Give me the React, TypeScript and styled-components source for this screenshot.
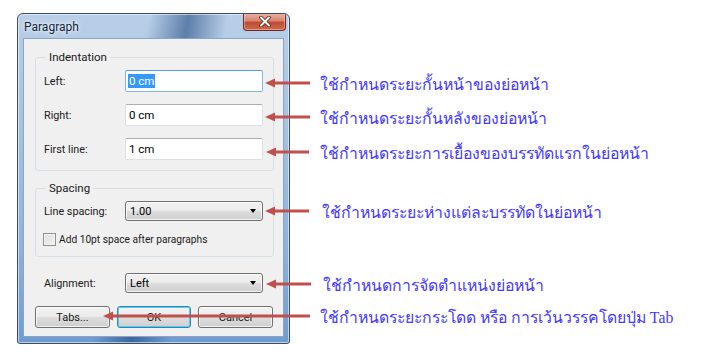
import React from "react";
import styled, { createGlobalStyle } from "styled-components";

const GlobalStyle = createGlobalStyle`
  html, body { margin: 0; padding: 0; background: #ffffff; }
  body {
    width: 709px;
    height: 356px;
    overflow: hidden;
    font-family: Roboto, "Liberation Sans", sans-serif;
  }
`;

const Page = styled.div`
  position: relative;
  width: 709px;
  height: 356px;
  box-sizing: border-box;
  padding: 13px 0 0 17px;
`;

const Window = styled.div`
  width: 273px;
  height: 331px;
  box-sizing: border-box;
  border: 1px solid #3a4d63;
  border-radius: 6px 6px 3px 3px;
  display: flex;
  flex-direction: column;
  background:
    linear-gradient(100deg, rgba(255,255,255,0) 0%, rgba(255,255,255,0) 40%, rgba(20,60,120,0.55) 52%, rgba(255,255,255,0) 64%, rgba(255,255,255,0) 100%),
    linear-gradient(180deg, #b9cfe8 0%, #a8c3e2 30%, #8fb2dc 70%, #6f9ccf 100%);
  box-shadow: inset 0 0 0 1px rgba(255, 255, 255, 0.55);
  overflow: hidden;
`;

const TitleBar = styled.div`
  height: 24px;
  display: flex;
  align-items: flex-start;
  justify-content: space-between;
  padding-left: 6px;
  padding-right: 3px;
`;

const Title = styled.span`
  font-size: 12px;
  line-height: 26px;
  color: #10243a;
  text-shadow: 0 0 6px rgba(255, 255, 255, 0.9), 0 0 3px rgba(255, 255, 255, 0.9);
`;

const CloseButton = styled.div`
  width: 43px;
  height: 18px;
  margin-top: -1px;
  box-sizing: border-box;
  border: 1px solid #6b2a22;
  border-top: none;
  border-radius: 0 0 4px 4px;
  background: linear-gradient(180deg, #eab3a6 0%, #d98672 45%, #c24a33 55%, #cf6a4d 100%);
  box-shadow: inset 0 0 0 1px rgba(255, 255, 255, 0.35);
  display: flex;
  align-items: center;
  justify-content: center;
`;

const Client = styled.div`
  flex: 1;
  margin: 0 5px 6px 5px;
  background: #f0f0f0;
  border: 1px solid #8aa6c4;
  box-sizing: border-box;
  padding: 11px 9px 0 11px;
  display: flex;
  flex-direction: column;
  font-size: 11px;
  color: #000;
`;

const Group = styled.fieldset<{ $mt?: number }>`
  margin: ${(p) => p.$mt ?? 0}px 0 0 0;
  padding: 5px 9px 10px 8px;
  border: 1px solid #d5dfe5;
  border-radius: 3px;
  min-inline-size: 0;
  display: flex;
  flex-direction: column;
`;

const Legend = styled.legend`
  padding: 0 3px;
  margin-left: 2px;
  font-size: 11.5px;
  line-height: 15px;
  color: #1a1a1a;
`;

const Rows = styled.div<{ $gap: number }>`
  display: flex;
  flex-direction: column;
  gap: ${(p) => p.$gap}px;
`;

const Row = styled.div<{ $pl?: number; $mt?: number }>`
  display: flex;
  align-items: center;
  padding-left: ${(p) => p.$pl ?? 0}px;
  margin-top: ${(p) => p.$mt ?? 0}px;
`;

const Label = styled.span`
  width: 81px;
  flex: none;
  font-size: 10.8px;
  color: #1a1a1a;
`;

const TextBox = styled.div<{ $focused?: boolean }>`
  width: 138px;
  height: 22px;
  box-sizing: border-box;
  background: #fff;
  border: 1px solid ${(p) => (p.$focused ? "#7eb4ea" : "#dbdfe6")};
  border-top-color: ${(p) => (p.$focused ? "#569de5" : "#abadb3")};
  border-radius: 2px;
  padding: 0 0 0 2px;
  display: flex;
  align-items: center;
  font-size: 11.5px;
`;

const Selected = styled.span`
  background: #3399ff;
  color: #fff;
  padding: 0 1px;
  line-height: 14px;
`;

const Plain = styled.span`
  padding: 0 1px;
`;

const Combo = styled.div`
  width: 138px;
  height: 20px;
  box-sizing: border-box;
  border: 1px solid #707070;
  border-radius: 3px;
  background: linear-gradient(180deg, #f2f2f2 0%, #ebebeb 50%, #dddddd 51%, #cfcfcf 100%);
  box-shadow: inset 0 0 0 1px rgba(255, 255, 255, 0.7);
  display: flex;
  align-items: center;
  justify-content: space-between;
  padding: 0 6px 0 4px;
  font-size: 11px;
`;

const Caret = styled.span`
  width: 0;
  height: 0;
  border-left: 3.5px solid transparent;
  border-right: 3.5px solid transparent;
  border-top: 4px solid #000;
`;

const CheckRow = styled.div`
  display: flex;
  align-items: center;
  gap: 3px;
  margin-top: 12px;
  margin-left: -1px;
  font-size: 10.2px;
  color: #1a1a1a;
`;

const CheckBox = styled.span`
  width: 13px;
  height: 13px;
  box-sizing: border-box;
  border: 1px solid #8e8f8f;
  background: linear-gradient(135deg, #dcdcdc 0%, #f4f4f4 100%);
  box-shadow: inset 0 0 0 1px #f4f4f4;
`;

const ButtonRow = styled.div`
  display: flex;
  gap: 7px;
  margin-top: 13px;
`;

const Button = styled.div<{ $w: number; $default?: boolean }>`
  width: ${(p) => p.$w}px;
  height: 22px;
  box-sizing: border-box;
  border: 1px solid ${(p) => (p.$default ? "#3c7fb1" : "#707070")};
  border-radius: 3px;
  background: linear-gradient(180deg, #f2f2f2 0%, #ebebeb 50%, #dddddd 51%, #cfcfcf 100%);
  box-shadow: inset 0 0 0 1px ${(p) => (p.$default ? "#48d4f8" : "rgba(255,255,255,0.7)")};
  display: flex;
  align-items: center;
  justify-content: center;
  font-size: 11px;
  color: #1a1a1a;
`;

const Callout = styled.div<{ $top: number; $left: number; $gap: number }>`
  position: absolute;
  top: ${(p) => p.$top}px;
  left: ${(p) => p.$left}px;
  height: 10px;
  display: flex;
  align-items: center;
  gap: ${(p) => p.$gap}px;
  white-space: nowrap;
`;

const Note = styled.span`
  font-family: "Liberation Serif", serif;
  font-size: 15.8px;
  line-height: 20px;
  color: #4238ff;
  margin-top: 3px;
`;

const Arrow = ({ length }: { length: number }) => (
  <svg width={length} height={10} viewBox={`0 0 ${length} 10`} style={{ flex: "none" }}>
    <line x1={8} y1={5} x2={length} y2={5} stroke="#c0504d" strokeWidth={3} />
    <polygon points="0,5 10,0.5 10,9.5" fill="#c0504d" />
  </svg>
);

const notes = [
  { y: 83, tip: 265, tail: 310, x: 320, text: "ใช้กำหนดระยะกั้นหน้าของย่อหน้า" },
  { y: 117, tip: 265, tail: 310, x: 320, text: "ใช้กำหนดระยะกั้นหลังของย่อหน้า" },
  { y: 152, tip: 266, tail: 309, x: 320, text: "ใช้กำหนดระยะการเยื้องของบรรทัดแรกในย่อหน้า" },
  { y: 211, tip: 265, tail: 309, x: 322, text: "ใช้กำหนดระยะห่างแต่ละบรรทัดในย่อหน้า" },
  { y: 284, tip: 266, tail: 311, x: 323, text: "ใช้กำหนดการจัดตำแหน่งย่อหน้า" },
  { y: 316, tip: 103, tail: 310, x: 320, text: "ใช้กำหนดระยะกระโดด หรือ การเว้นวรรคโดยปุ่ม Tab" },
];

export default function App() {
  return (
    <>
      <GlobalStyle />
      <Page>
        <Window>
          <TitleBar>
            <Title>Paragraph</Title>
            <CloseButton>
              <svg width="12" height="11" viewBox="0 0 12 11">
                <path d="M2 1.5 L10 9.5 M10 1.5 L2 9.5" stroke="#5a2018" strokeWidth="3.6" strokeLinecap="round" />
                <path d="M2 1.5 L10 9.5 M10 1.5 L2 9.5" stroke="#ffffff" strokeWidth="2" strokeLinecap="round" />
              </svg>
            </CloseButton>
          </TitleBar>
          <Client>
            <Group>
              <Legend>Indentation</Legend>
              <Rows $gap={12}>
                <Row>
                  <Label>Left:</Label>
                  <TextBox $focused>
                    <Selected>0 cm</Selected>
                  </TextBox>
                </Row>
                <Row>
                  <Label>Right:</Label>
                  <TextBox>
                    <Plain>0 cm</Plain>
                  </TextBox>
                </Row>
                <Row>
                  <Label>First line:</Label>
                  <TextBox>
                    <Plain>1 cm</Plain>
                  </TextBox>
                </Row>
              </Rows>
            </Group>
            <Group $mt={10}>
              <Legend>Spacing</Legend>
              <Row>
                <Label>Line spacing:</Label>
                <Combo>
                  <span>1.00</span>
                  <Caret />
                </Combo>
              </Row>
              <CheckRow>
                <CheckBox />
                <span>Add 10pt space after paragraphs</span>
              </CheckRow>
            </Group>
            <Row $pl={9} $mt={16}>
              <Label>Alignment:</Label>
              <Combo>
                <span>Left</span>
                <Caret />
              </Combo>
            </Row>
            <ButtonRow>
              <Button $w={75}>Tabs...</Button>
              <Button $w={74} $default>OK</Button>
              <Button $w={75}>Cancel</Button>
            </ButtonRow>
          </Client>
        </Window>
        {notes.map((n) => (
          <Callout key={n.y} $top={n.y - 5} $left={n.tip} $gap={n.x - n.tail}>
            <Arrow length={n.tail - n.tip} />
            <Note>{n.text}</Note>
          </Callout>
        ))}
      </Page>
    </>
  );
}
